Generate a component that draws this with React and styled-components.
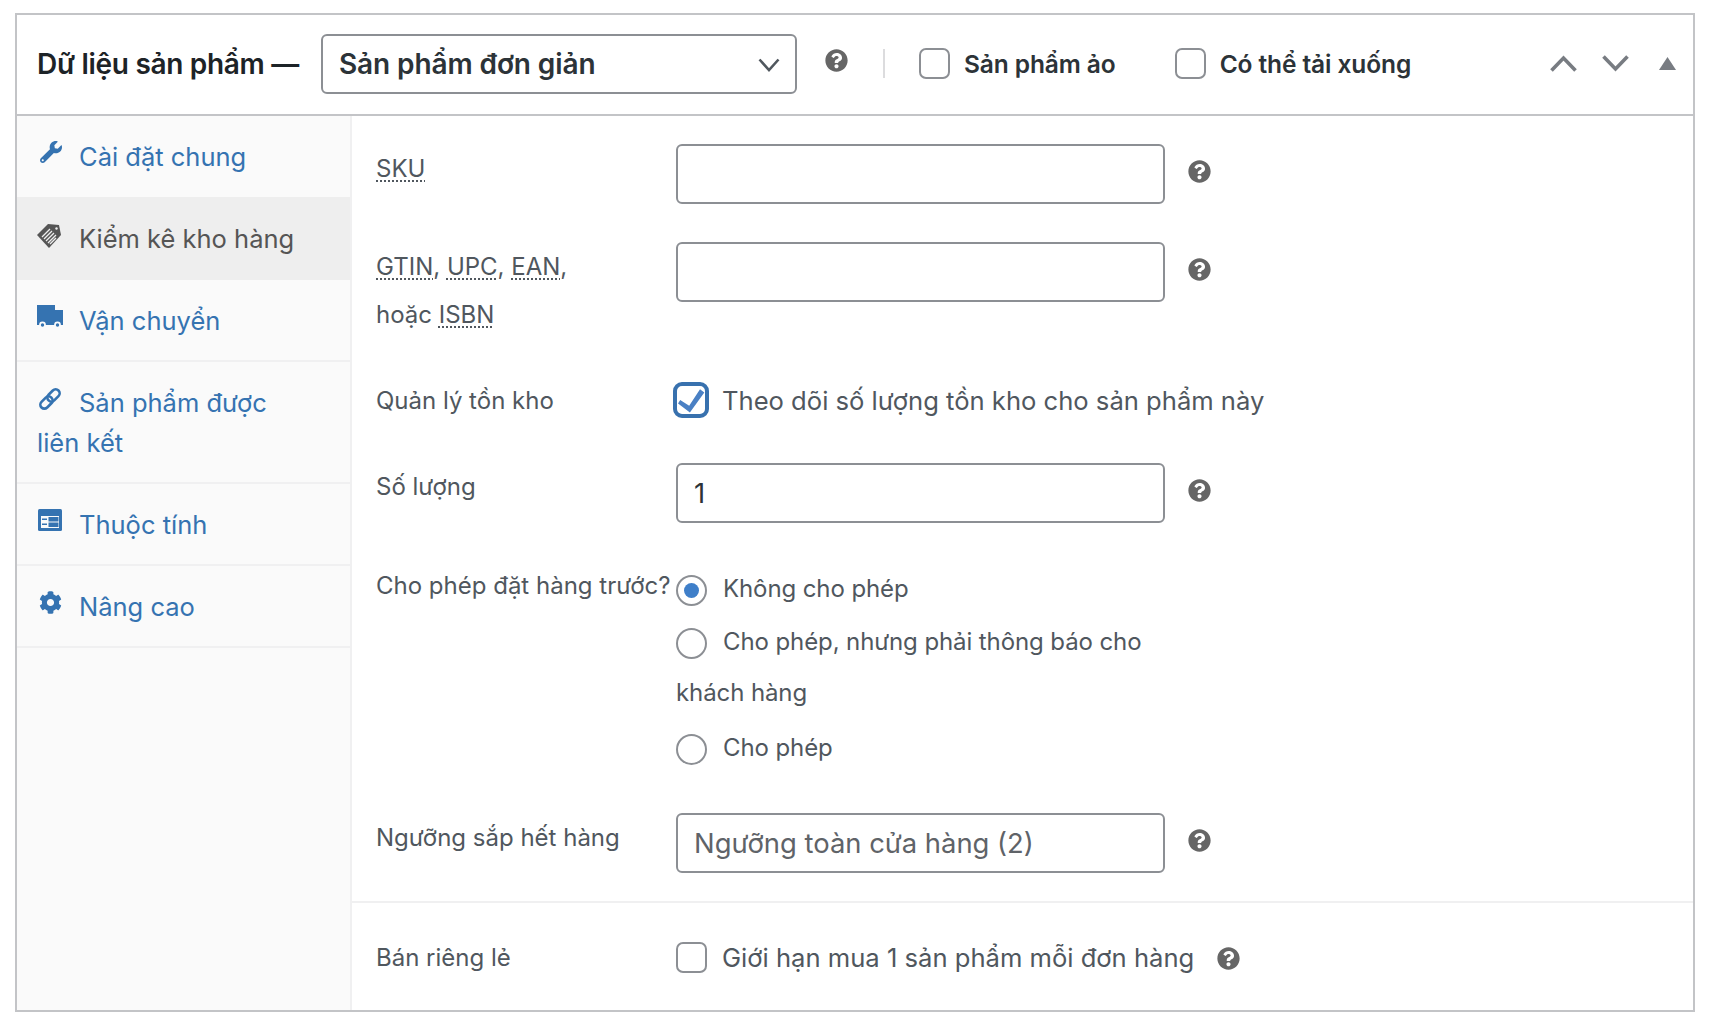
import React from 'react';
import styled, { createGlobalStyle } from 'styled-components';
import { FaWrench, FaCog, FaQuestionCircle } from 'react-icons/fa';

const GlobalStyle = createGlobalStyle`
  html, body {
    margin: 0;
    background: #fff;
  }
  body {
    font-family: Inter, "Noto Sans", "Liberation Sans", sans-serif;
    color: #50575e;
  }
`;

const Page = styled.div`
  padding: 13px 17px 17px 15px;
`;

const Panel = styled.section`
  border: 2px solid #c3c4c7;
  background: #fff;
`;

const Header = styled.header`
  display: flex;
  align-items: center;
  height: 97px;
  padding: 0 17px 2px 20px;
  border-bottom: 2px solid #c3c4c7;
`;

const Title = styled.h2`
  margin: 0 22px 0 0;
  font-size: 28px;
  font-weight: 600;
  letter-spacing: -0.3px;
  color: #1d2327;
  white-space: nowrap;
`;

const SelectWrap = styled.div`
  position: relative;
  width: 476px;
  height: 60px;
`;

const ProductSelect = styled.select`
  appearance: none;
  width: 100%;
  height: 100%;
  padding: 0 50px 0 16px;
  border: 2px solid #8c8f94;
  border-radius: 6px;
  background: #fff;
  font: 600 28px Inter, sans-serif;
  letter-spacing: -0.1px;
  color: #2c3338;
`;

const SelectArrow = styled.svg`
  position: absolute;
  top: 24px;
  right: 17px;
  pointer-events: none;
`;

const HelpTip = styled(FaQuestionCircle)`
  flex: none;
  color: #666;
  font-size: 23px;
  margin-left: ${(p) => p.$left || 23}px;
  margin-bottom: ${(p) => p.$lift || 0}px;
`;

const Separator = styled.span`
  width: 2px;
  height: 29px;
  margin: 0 34px 0 35px;
  background: #dcdcde;
`;

const TypeOption = styled.label`
  display: flex;
  align-items: center;
  gap: 14px;
  margin-right: ${(p) => p.$right || 0}px;
  font-size: 24.5px;
  font-weight: 600;
  letter-spacing: -0.1px;
  color: #2c3338;
  white-space: nowrap;
`;

const Checkbox = styled.input.attrs({ type: 'checkbox' })`
  appearance: none;
  position: relative;
  flex: none;
  width: 31px;
  height: 31px;
  margin: 0;
  border: 2px solid #8c8f94;
  border-radius: 7px;
  background: #fff;

  &:checked {
    width: 36px;
    height: 36px;
    margin: 0 -2px 0 -3px;
    border: 4px solid #3871ae;
    border-radius: 9px;
  }
  &:checked::before {
    content: '';
    position: absolute;
    inset: -4px;
    background: #4a80c4;
    clip-path: polygon(20% 50%, 45% 66%, 75% 20%, 87% 29%, 47% 85%, 14% 60%);
  }
`;

const HeaderActions = styled.div`
  display: flex;
  align-items: center;
  margin-left: auto;
`;

const ActionIcon = styled.svg`
  display: block;
  margin-left: ${(p) => p.$left || 0}px;
`;

const Body = styled.div`
  display: flex;
`;

const Sidebar = styled.ul`
  flex: none;
  width: 333px;
  margin: 0;
  padding: 0;
  list-style: none;
  background: #fafafa;
  border-right: 2px solid #f0f0f1;
`;

const Tab = styled.li`
  padding: ${(p) => (p.$first ? '21px 40px 18px 20px' : p.$active ? '22px 40px 19px 20px' : '21px 40px 19px 20px')};
  border-bottom: 2px solid ${(p) => (p.$first || p.$active ? 'transparent' : '#f0f0f1')};
  background: ${(p) => (p.$active ? '#eee' : 'transparent')};
  color: ${(p) => (p.$active ? '#555' : '#3573b1')};
  font-size: 25.5px;
  line-height: 40px;
`;

const TabIcon = styled.span`
  display: inline-block;
  width: ${(p) => 42 - (p.$x || 0)}px;
  height: 24px;
  margin-left: ${(p) => p.$x || 0}px;
  vertical-align: 1px;

  svg {
    display: block;
  }
`;

const Content = styled.div`
  flex: 1;
  min-width: 0;
`;

const Section = styled.div`
  padding: ${(p) => p.$pad};
  border-top: ${(p) => (p.$divided ? '2px solid #f0f0f1' : '0')};
`;

const Field = styled.div`
  display: flex;
  align-items: flex-start;
  margin-bottom: ${(p) => (p.$gap === undefined ? 40 : p.$gap)}px;
  &:last-child {
    margin-bottom: 0;
  }
`;

const Label = styled.label`
  flex: none;
  width: 300px;
  margin-top: ${(p) => (p.$drop ? 1 : 0)}px;
  font-size: 24px;
  line-height: 48px;

  abbr {
    text-decoration: underline dotted 2px;
    text-underline-offset: 3px;
  }
`;

const Control = styled.div`
  display: flex;
  align-items: center;
  min-height: 48px;
  font-size: 25.6px;
`;

const TextInput = styled.input`
  box-sizing: border-box;
  width: 489px;
  height: 60px;
  padding: 0 16px;
  border: 2px solid #8c8f94;
  border-radius: 6px;
  background: #fff;
  font: 400 27.4px Inter, sans-serif;
  color: #2c3338;
  outline: none;

  &::placeholder {
    color: #5f6368;
    opacity: 1;
  }
`;

const InlineText = styled.label`
  display: flex;
  align-items: center;
  gap: 15px;
  margin-top: -2px;
  white-space: nowrap;
`;

const RadioList = styled.ul`
  width: 489px;
  margin: 0;
  padding: 1px 0 0;
  list-style: none;
`;

const RadioItem = styled.li`
  margin-bottom: ${(p) => p.$gap || 2}px;
  font-size: 24px;
  line-height: 51px;
  letter-spacing: -0.1px;
  &:last-child {
    margin-bottom: 0;
  }
`;

const Radio = styled.input.attrs({ type: 'radio' })`
  appearance: none;
  position: relative;
  width: 31px;
  height: 31px;
  margin: 0 16px 0 0;
  border: 2px solid #8c8f94;
  border-radius: 50%;
  background: #fff;
  vertical-align: -9px;

  &:checked::before {
    content: '';
    position: absolute;
    inset: 6px;
    border-radius: 50%;
    background: #3f7fc9;
  }
`;

const TruckIcon = () => (
  <svg width="26" height="23" viewBox="0 0 26 23">
    <path d="M0 0h18v5h8v15H0z" fill="#3573b1" />
    <circle cx="5.5" cy="20" r="3.4" fill="#fafafa" />
    <circle cx="20.5" cy="20" r="3.4" fill="#fafafa" />
    <circle cx="5.5" cy="20" r="1.7" fill="#3573b1" />
    <circle cx="20.5" cy="20" r="1.7" fill="#3573b1" />
  </svg>
);

const TagIcon = () => (
  <svg width="26" height="26" viewBox="0 0 26 26">
    <path d="M0 12L11 1l11 1 2 10-12 13z" fill="#555" />
    <g stroke="#eee" strokeWidth="1.3">
      <path d="M5 14l8-8M7 16l8-8M9 18l8-8M11 20l8-8M13 21l6-6" />
    </g>
    <circle cx="19.5" cy="5.5" r="1.2" fill="#eee" />
  </svg>
);

const LinkIcon = () => (
  <svg width="24" height="24" viewBox="0 0 24 24" fill="none" stroke="#3573b1" strokeWidth="2.6">
    <g transform="rotate(-45 12 12)">
      <rect x="0" y="8" width="14" height="8" rx="4" />
      <rect x="10" y="8" width="14" height="8" rx="4" />
    </g>
  </svg>
);

const TableIcon = () => (
  <svg width="24" height="22" viewBox="0 0 24 22">
    <rect width="24" height="22" rx="1.5" fill="#3573b1" />
    <rect x="3" y="7" width="18" height="12" fill="#fafafa" />
    <path d="M4 9.5h5v1.6H4zM4 14.5h5v1.6H4zM10.5 8h10v4.5h-10zM10.5 13.5h10V18h-10z" fill="#3573b1" />
  </svg>
);

const tabs = [
  { label: 'Cài đặt chung', icon: <FaWrench size={22} color="#3573b1" />, first: true, x: 3 },
  { label: 'Kiểm kê kho hàng', icon: <TagIcon />, active: true },
  { label: 'Vận chuyển', icon: <TruckIcon /> },
  { label: 'Sản phẩm được liên kết', icon: <LinkIcon />, x: 1 },
  { label: 'Thuộc tính', icon: <TableIcon />, x: 1 },
  { label: 'Nâng cao', icon: <FaCog size={23} color="#3573b1" />, x: 2 },
];

const App = () => (
  <Page>
    <GlobalStyle />
    <Panel>
      <Header>
        <Title>Dữ liệu sản phẩm —</Title>
        <SelectWrap>
          <ProductSelect defaultValue="simple">
            <option value="simple">Sản phẩm đơn giản</option>
          </ProductSelect>
          <SelectArrow width="22" height="14" viewBox="0 0 22 14" fill="none" stroke="#50575e" strokeWidth="2.6">
            <path d="M1.5 1.5L11 12l9.5-10.5" />
          </SelectArrow>
        </SelectWrap>
        <HelpTip $left={28} $lift={6} />
        <Separator />
        <TypeOption $right={59}>
          <Checkbox />
          Sản phẩm ảo
        </TypeOption>
        <TypeOption>
          <Checkbox />
          Có thể tải xuống
        </TypeOption>
        <HeaderActions>
          <ActionIcon width="27" height="17" viewBox="0 0 27 17" fill="none" stroke="#787c82" strokeWidth="3.6">
            <path d="M1.5 15.5L13.5 3l12 12.5" />
          </ActionIcon>
          <ActionIcon $left={25} width="27" height="17" viewBox="0 0 27 17" fill="none" stroke="#787c82" strokeWidth="3.6">
            <path d="M1.5 1.5L13.5 14l12-12.5" />
          </ActionIcon>
          <ActionIcon $left={30} width="17" height="13" viewBox="0 0 17 13" fill="#787c82">
            <path d="M8.5 0L17 13H0z" />
          </ActionIcon>
        </HeaderActions>
      </Header>
      <Body>
        <Sidebar>
          {tabs.map((tab) => (
            <Tab key={tab.label} $active={tab.active} $first={tab.first}>
              <TabIcon $x={tab.x}>{tab.icon}</TabIcon>
              {tab.label}
            </Tab>
          ))}
        </Sidebar>
        <Content>
          <Section $pad="28px 24px 28px 24px">
            <Field $gap={38}>
              <Label $drop><abbr>SKU</abbr></Label>
              <Control>
                <TextInput />
                <HelpTip $lift={5} />
              </Control>
            </Field>
            <Field $gap={38}>
              <Label $drop>
                <abbr>GTIN</abbr>, <abbr>UPC</abbr>, <abbr>EAN</abbr>,<br />
                hoặc <abbr>ISBN</abbr>
              </Label>
              <Control>
                <TextInput />
                <HelpTip $lift={5} />
              </Control>
            </Field>
            <Field $gap={38}>
              <Label>Quản lý tồn kho</Label>
              <Control>
                <InlineText>
                  <Checkbox defaultChecked />
                  Theo dõi số lượng tồn kho cho sản phẩm này
                </InlineText>
              </Control>
            </Field>
            <Field $gap={39}>
              <Label>Số lượng</Label>
              <Control>
                <TextInput defaultValue="1" />
                <HelpTip $lift={5} />
              </Control>
            </Field>
            <Field>
              <Label>Cho phép đặt hàng trước?</Label>
              <RadioList>
                <RadioItem><label><Radio name="backorder" defaultChecked />Không cho phép</label></RadioItem>
                <RadioItem $gap={4}><label><Radio name="backorder" />Cho phép, nhưng phải thông báo cho khách hàng</label></RadioItem>
                <RadioItem><label><Radio name="backorder" />Cho phép</label></RadioItem>
              </RadioList>
            </Field>
            <Field>
              <Label $drop>Ngưỡng sắp hết hàng</Label>
              <Control>
                <TextInput placeholder="Ngưỡng toàn cửa hàng (2)" />
                <HelpTip $lift={5} />
              </Control>
            </Field>
          </Section>
          <Section $divided $pad="31px 24px 28px 24px">
            <Field>
              <Label>Bán riêng lẻ</Label>
              <Control>
                <InlineText>
                  <Checkbox />
                  Giới hạn mua 1 sản phẩm mỗi đơn hàng
                </InlineText>
                <HelpTip $left={23} />
              </Control>
            </Field>
          </Section>
        </Content>
      </Body>
    </Panel>
  </Page>
);

export default App;
